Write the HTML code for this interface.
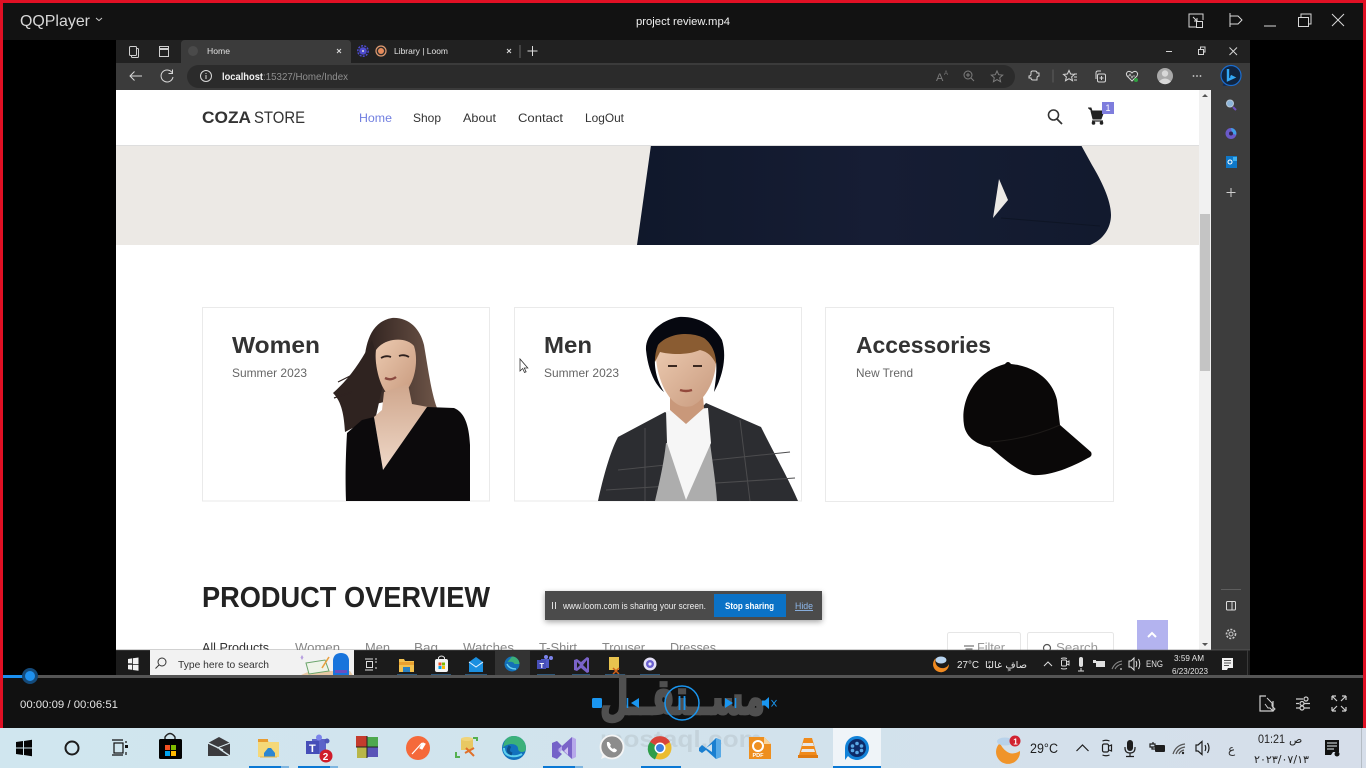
<!DOCTYPE html>
<html lang="en">
<head>
<meta charset="utf-8">
<title>QQPlayer - project review.mp4</title>
<style>
html,body{margin:0;padding:0;width:1366px;height:768px;overflow:hidden;background:#000}
svg{display:block;position:absolute;left:0;top:0;filter:blur(.35px)}
text{font-family:"Liberation Sans","DejaVu Sans",sans-serif}
.ar{font-family:"DejaVu Sans","Liberation Sans",sans-serif}
</style>
</head>
<body>
<svg width="1366" height="768" viewBox="0 0 1366 768" xmlns="http://www.w3.org/2000/svg">
<defs>
<linearGradient id="tb" x1="0" x2="1" y1="0" y2="0"><stop offset="0" stop-color="#d0e6ef"/><stop offset=".6" stop-color="#d2e2ec"/><stop offset="1" stop-color="#d6deea"/></linearGradient>
<linearGradient id="jk" x1="0" x2="1" y1="0" y2="0"><stop offset="0" stop-color="#10182b"/><stop offset=".5" stop-color="#161d34"/><stop offset="1" stop-color="#121a2e"/></linearGradient>
<linearGradient id="skin" x1="0" x2="1" y1="0" y2="1"><stop offset="0" stop-color="#eccab0"/><stop offset="1" stop-color="#c89a7e"/></linearGradient>
<linearGradient id="chest" x1="0" x2="0" y1="0" y2="1"><stop offset="0" stop-color="#cfa68c"/><stop offset="1" stop-color="#efd8c8"/></linearGradient>
<linearGradient id="hairw" x1="0" x2="1" y1="0" y2="0"><stop offset="0" stop-color="#2e211e"/><stop offset="1" stop-color="#6e5548"/></linearGradient>
<filter id="sh" x="-10%" y="-40%" width="120%" height="180%"><feGaussianBlur stdDeviation="3"/></filter>
<clipPath id="page"><rect x="116" y="90" width="1083" height="560"/></clipPath>
</defs>

<!-- outer frame -->
<rect width="1366" height="768" fill="#000"/>
<rect width="1366" height="3" fill="#e01024"/>
<rect y="0" width="3" height="728" fill="#e01024"/>
<rect x="1363" y="0" width="3" height="728" fill="#e01024"/>
<rect x="3" y="3" width="1360" height="37" fill="#121212"/>

<!-- player header -->
<text x="20" y="26" font-size="16" fill="#d8d8d8" textLength="70" lengthAdjust="spacingAndGlyphs">QQPlayer</text>
<path d="M96 18l3 2.6 3-2.6" fill="none" stroke="#ccc" stroke-width="1"/>
<text x="636" y="25" font-size="11" fill="#f0f0f0" textLength="94" lengthAdjust="spacingAndGlyphs">project review.mp4</text>
<g fill="none" stroke="#d8d8d8" stroke-width="1">
<path d="M1196 14h-7v13h7M1196 14h7v6M1193 17l4 4M1197 18v3h-3"/><rect x="1196.500" y="21.500" width="6" height="6"/>
<path d="M1230 13v14M1230 16l8 0 4 4-4 4-8 0" stroke-linejoin="round"/>
<path d="M1264 26h12"/>
<rect x="1298.500" y="17.500" width="10" height="9"/><path d="M1301 17v-3h10v10h-2"/>
<path d="M1332 14l12 12M1344 14l-12 12"/>
</g>

<!-- browser chrome -->
<rect x="116" y="40" width="1134" height="23" fill="#212121"/>
<path d="M181 63v-19q0-4 4-4h162q4 0 4 4v19z" fill="#3b3b3b"/>
<rect x="116" y="63" width="1134" height="27" fill="#3b3b3b"/>
<rect x="187" y="65" width="828" height="23" rx="11.500" fill="#2b2b2b"/>
<g fill="none" stroke="#cfcfcf" stroke-width="1">
<rect x="131.500" y="48.500" width="7" height="9" rx="1"/><rect x="129.500" y="46.500" width="7" height="9" rx="1" fill="#212121"/>
<rect x="159.500" y="46.500" width="9" height="10"/><path d="M159 49h10" stroke-width="2"/>
</g>
<circle cx="193" cy="51" r="5" fill="#4a4a4a"/>
<text x="207" y="54" font-size="8.500" fill="#e2e2e2" textLength="23" lengthAdjust="spacingAndGlyphs">Home</text>
<path d="M337 49l4 4M341 49l-4 4M507 49l4 4M511 49l-4 4" stroke="#dcdcdc" stroke-width="1" fill="none"/>
<circle cx="363" cy="51" r="3.800" fill="#4d4bd0"/><circle cx="363" cy="51" r="5.200" fill="none" stroke="#4d4bd0" stroke-width="1.500" stroke-dasharray="2 1.200"/><circle cx="363" cy="51" r="1" fill="#ddd"/>
<circle cx="381" cy="51" r="5" fill="#2b2b2b" stroke="#e09a70" stroke-width="1.200"/><circle cx="381" cy="51" r="3" fill="#e68a5a"/>
<text x="394" y="54" font-size="8.500" fill="#e2e2e2" textLength="54" lengthAdjust="spacingAndGlyphs">Library | Loom</text>
<path d="M520 45v13" stroke="#666" stroke-width="1"/>
<path d="M532.500 46v10M527.500 51h10" stroke="#ddd" stroke-width="1" fill="none"/>
<g fill="none" stroke="#d4d4d4" stroke-width="1">
<path d="M1166 51.500h6"/>
<rect x="1198.500" y="49.500" width="5" height="5"/><path d="M1200.500 49v-2h4.500v5h-1"/>
<path d="M1229.500 47.500l7.500 7.500M1237 47.500l-7.500 7.500"/>
<path d="M142 76h-12M134.500 71.500l-4.500 4.500 4.500 4.500" stroke="#d8d8d8"/>
<path d="M172 72.500A6 6 0 1 0 173 77M172.500 69.500v4h-4" stroke="#d8d8d8"/>
<circle cx="206" cy="76" r="5.500" stroke="#d8d8d8"/><path d="M206 75v4M206 73v1" stroke="#d8d8d8"/>
</g>
<text x="222" y="80" font-size="10.500" fill="#f2f2f2" font-weight="700" textLength="41" lengthAdjust="spacingAndGlyphs">localhost</text>
<text x="263" y="80" font-size="10.500" fill="#8f8f8f" textLength="85" lengthAdjust="spacingAndGlyphs">:15327/Home/Index</text>
<g fill="none" stroke="#7c7c7c" stroke-width="1">
<text x="936" y="81" font-size="11" fill="#7c7c7c" stroke="none">A</text><text x="944" y="75" font-size="6" fill="#7c7c7c" stroke="none">A</text>
<circle cx="968" cy="75" r="4"/><path d="M971 78l3 3M966 75h4M968 73v4"/>
<path d="M997 71l1.700 3.700 4 .4-3 2.700 .9 3.900-3.600-2.100-3.600 2.100 .9-3.900-3-2.700 4-.4z"/>
</g>
<g fill="none" stroke="#d6d6d6" stroke-width="1">
<path d="M1032 71h3q2 0 2 2h2v3q-2 0-2 2v2h-4q-2 0-2-2h-2v-2q2 0 2-2v-2z"/>
<path d="M1053 69.500v13" stroke="#5c5c5c"/>
<path d="M1069 70.500l1.600 3.500 3.900.4-2.900 2.500.9 3.800-3.500-2-3.500 2 .9-3.800-2.900-2.500 3.900-.4z"/><path d="M1074 74h3M1074 77h3M1074 80h3"/>
<rect x="1097.500" y="74" width="8" height="8" rx="1.500"/><path d="M1096 79v-6q0-2 2-2h3M1101.500 76v4M1099.500 78h4"/>
<path d="M1132 81l-5-5q-1.500-3 1-4.500 2.500-.5 4 1.500 1.500-2 4-1.500 2.500 1.500 1 4.500z"/><path d="M1127 76h2l1-2 2 4 1-2h2" stroke-width=".7"/>
</g>
<circle cx="1136" cy="80" r="2" fill="#30a040"/>
<circle cx="1165" cy="76" r="8" fill="#a9a9a9"/><circle cx="1165" cy="73.500" r="3.200" fill="#d8d8d8"/><path d="M1159 81.500q6-6 12 0a8 8 0 0 1-12 0z" fill="#d8d8d8"/>
<g fill="#d0d0d0"><circle cx="1193.500" cy="76" r=".9"/><circle cx="1197" cy="76" r=".9"/><circle cx="1200.500" cy="76" r=".9"/></g>
<path d="M1224 83l-1.500 2.500q8 1 14-2z" fill="#102a55"/>
<circle cx="1231" cy="75.500" r="10" fill="#10243f" stroke="#1a6dd0" stroke-width="1.200"/>
<path d="M1228 69v11l5.500-2.500-3-1.500" fill="none" stroke="#33a8f5" stroke-width="2.400"/>

<!-- page -->
<g clip-path="url(#page)">
<rect x="116" y="90" width="1083" height="560" fill="#fff"/>
<rect x="116" y="145" width="1083" height="100" fill="#ece9e5"/>
<path d="M651 145L637 245H1090C1103 240 1111 228 1111 215C1111 200 1101 180 1092 165L1081 145Z" fill="url(#jk)"/>
<path d="M999 179L1008 200L993 218Z" fill="#ece9e5"/>
<path d="M1001 218L1100 226" stroke="#0e1525" stroke-width="1" fill="none"/>
<rect x="116" y="145" width="1083" height="1" fill="#dedede"/>

<!-- navbar -->
<text x="202" y="123" font-size="17" font-weight="700" fill="#333" textLength="49" lengthAdjust="spacingAndGlyphs">COZA</text>
<text x="254" y="123" font-size="17" fill="#333" textLength="51" lengthAdjust="spacingAndGlyphs">STORE</text>
<g font-size="12" fill="#333">
<text x="359" y="122" fill="#717fe0" textLength="33" lengthAdjust="spacingAndGlyphs">Home</text>
<text x="413" y="122" textLength="28" lengthAdjust="spacingAndGlyphs">Shop</text>
<text x="463" y="122" textLength="33" lengthAdjust="spacingAndGlyphs">About</text>
<text x="518" y="122" textLength="45" lengthAdjust="spacingAndGlyphs">Contact</text>
<text x="585" y="122" textLength="39" lengthAdjust="spacingAndGlyphs">LogOut</text>
</g>
<circle cx="1053.500" cy="115" r="5" fill="none" stroke="#333" stroke-width="1.600"/><path d="M1057 119l5 5" stroke="#333" stroke-width="1.800"/>
<path d="M1088 108h3l1 3h12l-3 8h-8l-2-8" fill="#222" stroke="#222" stroke-width="1"/><path d="M1092 121h11" stroke="#222" stroke-width="1.200"/>
<circle cx="1093.500" cy="123" r="1.800" fill="#222"/><circle cx="1101.500" cy="123" r="1.800" fill="#222"/>
<rect x="1102" y="102" width="12" height="12" fill="#7e7ddd"/>
<text x="1105.500" y="111" font-size="9" fill="#fff">1</text>

<!-- banners -->
<g fill="#fff" stroke="#eaeaea" stroke-width="1">
<rect x="202.500" y="307.500" width="287" height="193.500"/>
<rect x="514.500" y="307.500" width="287" height="193.500"/>
<rect x="825.500" y="307.500" width="288" height="194"/>
</g>

<!-- woman -->
<g>
<path d="M392 318C408 317 420 328 424 345C428 368 431 392 437 408L420 412L392 400L372 405L364 372C364 350 368 322 392 318Z" fill="url(#hairw)"/>
<path d="M372 340C362 360 350 378 333 393C342 402 344 416 345 432L376 416L384 380Z" fill="#2f2320"/>
<path d="M358 372L338 382M352 392L334 398" stroke="#2f2320" stroke-width="1.200" fill="none"/>
<path d="M376 350C384 338 406 336 414 346C418 358 416 376 409 387C403 395 394 397 388 394C380 388 374 364 376 350Z" fill="url(#skin)"/>
<path d="M384 392L408 384L412 404L428 407L383 470L374 417L382 410Z" fill="url(#chest)"/>
<path d="M381 358q5-3 10-1M399 356q5-2 10 1" stroke="#2e211e" stroke-width="1.800" fill="none"/>
<path d="M385 378q6 3 11-1" stroke="#8a4a40" stroke-width="2.400" fill="none"/>
<path d="M346 501C345 475 346 450 347 433L362 420L374 417L383 470L427 407L454 408C464 412 469 424 470 445L470 501Z" fill="#0c0a0c"/>
</g>

<!-- man -->
<g>
<path d="M598 501C603 478 610 452 618 437L665 412L686 425L706 403L761 427C775 455 790 482 798 501Z" fill="#2c2d31"/>
<path d="M618 470L790 452M606 490L795 478M645 428V501M740 420L750 501" stroke="#4c4c4e" stroke-width="1" fill="none"/>
<path d="M655 501C660 480 664 462 666 443L710 443C713 465 716 485 717 501Z" fill="#adadad"/>
<path d="M666 411L708 408L711 443L686 500L667 443Z" fill="#f6f6f6"/>
<path d="M670 385L670 410L686 424L704 408L702 385Z" fill="#c9987a"/>
<path d="M656 350C660 344 712 344 716 352C718 375 708 398 692 406C680 409 672 402 666 392C660 382 655 365 656 350Z" fill="url(#skin)"/>
<path d="M655 362C650 345 668 332 686 332C704 332 720 345 716 364C712 356 708 352 700 350C686 356 668 354 660 352Z" fill="#8a5c32"/>
<path d="M679 317C697 316 714 325 722 340C727 356 723 376 714 392C717 372 720 350 704 338C690 331 668 333 658 345C652 360 655 378 664 392C655 385 648 370 646 350C645 335 660 320 679 317Z" fill="#060810"/>
<path d="M668 366h9M693 366h9" stroke="#3a2820" stroke-width="2"/>
<path d="M680 390q6 2 12 0" stroke="#93493c" stroke-width="2.400" fill="none"/>
</g>

<!-- cap -->
<path d="M1005 364Q1008 360 1011 364C1032 366 1052 378 1057 400L1060 425L1091 452Q1093 456 1088 458C1070 468 1050 476 1033 475C1018 472 1003 458 990 447C978 445 966 438 964 425C960 400 975 372 1005 364Z" fill="#0a0808"/>
<path d="M990 442C1015 440 1040 434 1060 425" fill="none" stroke="#1d1a18" stroke-width="1"/>

<g fill="#333" font-weight="700" font-size="23">
<text x="232" y="353" textLength="88" lengthAdjust="spacingAndGlyphs">Women</text>
<text x="544" y="353" textLength="48" lengthAdjust="spacingAndGlyphs">Men</text>
<text x="856" y="353" textLength="135" lengthAdjust="spacingAndGlyphs">Accessories</text>
</g>
<g fill="#666" font-size="12">
<text x="232" y="377" textLength="75" lengthAdjust="spacingAndGlyphs">Summer 2023</text>
<text x="544" y="377" textLength="75" lengthAdjust="spacingAndGlyphs">Summer 2023</text>
<text x="856" y="377" textLength="57" lengthAdjust="spacingAndGlyphs">New Trend</text>
</g>
<path d="M520 359v12l2.700-2.500 1.800 4 1.600-.7-1.800-3.800h3.500z" fill="#fff" stroke="#333" stroke-width=".8"/>

<!-- product overview -->
<text x="202" y="607" font-size="29" font-weight="700" fill="#222" textLength="288" lengthAdjust="spacingAndGlyphs">PRODUCT OVERVIEW</text>
<g font-size="12.500" fill="#888">
<text x="202" y="652" fill="#333" textLength="67" lengthAdjust="spacingAndGlyphs">All Products</text>
<text x="295" y="652" textLength="45" lengthAdjust="spacingAndGlyphs">Women</text>
<text x="365" y="652" textLength="25" lengthAdjust="spacingAndGlyphs">Men</text>
<text x="414" y="652" textLength="24" lengthAdjust="spacingAndGlyphs">Bag</text>
<text x="463" y="652" textLength="51" lengthAdjust="spacingAndGlyphs">Watches</text>
<text x="539" y="652" textLength="38" lengthAdjust="spacingAndGlyphs">T-Shirt</text>
<text x="602" y="652" textLength="43" lengthAdjust="spacingAndGlyphs">Trouser</text>
<text x="670" y="652" textLength="46" lengthAdjust="spacingAndGlyphs">Dresses</text>
</g>
<g fill="#fff" stroke="#e6e6e6"><rect x="947.500" y="632.500" width="73" height="30" rx="2"/><rect x="1027.500" y="632.500" width="86" height="30" rx="2"/></g>
<path d="M964 646h10M965.500 649h7M967 652h4" stroke="#555" stroke-width="1"/>
<circle cx="1047" cy="648" r="3.500" fill="none" stroke="#555" stroke-width="1.200"/>
<g font-size="12.500" fill="#999"><text x="977" y="652" textLength="28" lengthAdjust="spacingAndGlyphs">Filter</text><text x="1056" y="652" textLength="42" lengthAdjust="spacingAndGlyphs">Search</text></g>
<rect x="1137" y="620" width="31" height="30" fill="#b3b3ef"/>
<path d="M1148 637l4-4 4 4" fill="none" stroke="#fff" stroke-width="2"/>
</g>

<!-- scrollbar and sidebar -->
<rect x="1199" y="90" width="12" height="560" fill="#f1f1f1"/>
<rect x="1200" y="214" width="10" height="157" fill="#c4c4c4"/>
<path d="M1205 94l-3 3h6zM1205 646l-3-3h6z" fill="#555"/>
<rect x="1211" y="90" width="39" height="560" fill="#3d3d3d"/>
<circle cx="1230" cy="103.500" r="3.500" fill="#8cb4d8" stroke="#b8c8d8"/><path d="M1233 107l3 3" stroke="#7050c0" stroke-width="2"/>
<circle cx="1231" cy="133.500" r="5.500" fill="#6a5ac8"/><path d="M1231 128a5.500 5.500 0 0 1 5 7l-4-2z" fill="#3fa0e8"/><circle cx="1231" cy="133.500" r="2" fill="#30244c"/>
<rect x="1226" y="156" width="11" height="12" fill="#0f78c8"/><rect x="1233" y="157" width="4" height="4" fill="#3fb0f0"/><circle cx="1230" cy="162" r="2" fill="none" stroke="#fff"/>
<path d="M1231 188v9M1226.500 192.500h9" stroke="#cfcfcf" stroke-width="1"/>
<path d="M1221 589.500h20" stroke="#5e5e5e"/>
<rect x="1226.500" y="601.500" width="9" height="8.500" rx="1" fill="none" stroke="#dcdcdc"/><path d="M1232 601.500v8.500" stroke="#dcdcdc" stroke-width="1"/>
<circle cx="1231" cy="634" r="2" fill="none" stroke="#c8c8c8"/><circle cx="1231" cy="634" r="4.500" fill="none" stroke="#c8c8c8" stroke-width="1.600" stroke-dasharray="2 1.400"/>

<!-- loom bar -->
<rect x="545" y="593" width="277" height="29" fill="#000" opacity=".35" filter="url(#sh)"/>
<rect x="545" y="591" width="277" height="29" fill="#4b4b4b"/>
<path d="M552.500 602v7M555.500 602v7" stroke="#ddd" stroke-width="1"/>
<text x="563" y="609" font-size="9" fill="#eee" textLength="143" lengthAdjust="spacingAndGlyphs">www.loom.com is sharing your screen.</text>
<rect x="714" y="594" width="72" height="23" fill="#0b72c6"/>
<text x="725" y="609" font-size="9" fill="#fff" font-weight="700" textLength="49" lengthAdjust="spacingAndGlyphs">Stop sharing</text>
<text x="795" y="609" font-size="9" fill="#8eb8ec" text-decoration="underline" textLength="18" lengthAdjust="spacingAndGlyphs">Hide</text>

<!-- inner windows taskbar -->
<rect x="116" y="650" width="1134" height="26" fill="#1b1b1b"/>
<rect x="116" y="649.500" width="1134" height="1" fill="#666" opacity=".6"/>
<g fill="#f2f2f2"><path d="M128 659l4-.6v5h-4zM132.800 658.300l5.700-.8v6.500h-5.700zM128 664.800h4v5l-4-.6zM132.800 664.800h5.700v6l-5.700-.8z"/></g>
<rect x="150" y="650" width="204" height="27" fill="#f2f2f2"/>
<circle cx="162" cy="662" r="4" fill="none" stroke="#333"/><path d="M159 665l-3.500 3.500" stroke="#333"/>
<text x="178" y="668" font-size="10.500" fill="#333" textLength="91" lengthAdjust="spacingAndGlyphs">Type here to search</text>
<path d="M298 677q10-7 22-6l30 0 4 6z" fill="#e8c8a4"/>
<path d="M306 663l19-3 4 11-20 3z" fill="#eef4e8" stroke="#6aa56a" stroke-width="1"/>
<path d="M322 668l7-11" stroke="#e8a040" stroke-width="1.600"/>
<path d="M333 660q1-7 8-7t8 7v15h-16z" fill="#1874dc"/>
<rect x="335" y="670" width="12" height="3" fill="#6a4fc0"/>
<path d="M302 655l1.500 2.500 -1.500 2.500 -1.500-2.500z" fill="#b8a0e0"/>
<g fill="none" stroke="#ddd" stroke-width="1"><rect x="366.500" y="661.500" width="6" height="6"/><path d="M365 659h8M365 670h8M375 659h2M375 662h2M375 668h2"/></g>
<rect x="495" y="650" width="35" height="26" fill="#333"/>
<!-- inner app icons -->
<path d="M399 659h5l1 2h9v11h-15z" fill="#f2c14e"/><rect x="399" y="662" width="15" height="3" fill="#e8a030"/><rect x="403" y="667" width="7" height="5" fill="#2a80c0"/>
<rect x="435" y="659" width="13" height="13" rx="2" fill="#f4f4f4"/><path d="M438.500 659v-1.500q3-3 6 0v1.500" fill="none" stroke="#ddd"/>
<rect x="438.500" y="662.500" width="3" height="3" fill="#f25022"/><rect x="442" y="662.500" width="3" height="3" fill="#7fba00"/><rect x="438.500" y="666" width="3" height="3" fill="#00a4ef"/><rect x="442" y="666" width="3" height="3" fill="#ffb900"/>
<path d="M469 662l7-5 7 5v10h-14z" fill="#1a8fe0"/><path d="M469 662l7 5 7-5" fill="none" stroke="#e8f4ff"/>
<circle cx="512" cy="664" r="7.500" fill="#1370b8"/><path d="M512 656.500a7.500 7.500 0 0 1 7.500 7.500h-5q-1-3-7-2z" fill="#39b07c"/><path d="M507 664q2 5 9 5" stroke="#68d0f0" fill="none" stroke-width="1.400"/>
<path d="M541 659h8v9h-8z" fill="#5059c9"/><rect x="537" y="660" width="9" height="9" fill="#464eb8"/><text x="539.500" y="668" font-size="7.500" font-weight="700" fill="#fff">T</text><circle cx="551" cy="658" r="2" fill="#7b83eb"/><circle cx="546" cy="657" r="2" fill="#7b83eb"/>
<path d="M574 660l3-1 4 3 6-5 2 1v14l-2 1-6-5-4 3-3-1z" fill="#7a63c8"/><path d="M577 662v6l3-3zM587 660l-4 5 4 4z" fill="#1b1b1b"/>
<rect x="609" y="657" width="10" height="13" fill="#e8c34e"/><path d="M613 668l6 6M619 668l-6 6" stroke="#d0601a" stroke-width="1.500"/>
<circle cx="650" cy="664" r="6.500" fill="#e4e0f6"/><circle cx="650" cy="664" r="4" fill="#6a5fd0"/><circle cx="650" cy="664" r="1.600" fill="#e8e8f8"/>
<g stroke="#3a80b8" stroke-width="2" opacity=".6"><path d="M397 675h20M431 675h20M465 675h22M537 675h18M572 675h18M605 675h20M640 675h20"/></g>
<!-- inner tray -->
<path d="M936 658a8 8 0 1 0 13 6 5 5 0 0 1-13-6z" fill="#f08a20"/><ellipse cx="941" cy="660" rx="5.500" ry="3.500" fill="#b8d4f0"/>
<text x="957" y="668" font-size="10" fill="#e8e8e8" textLength="22" lengthAdjust="spacingAndGlyphs">27°C</text>
<text class="ar" x="985" y="668" font-size="9.500" fill="#e8e8e8" textLength="42" lengthAdjust="spacingAndGlyphs">صافٍ غالبًا</text>
<g fill="none" stroke="#dcdcdc" stroke-width="1">
<path d="M1044 666l4-4 4 4"/>
<rect x="1061.500" y="660" width="5" height="6" rx="1"/><path d="M1067 662l2-1v4l-2-1M1061 658.500q3-1 6 0M1061 668.500q3 1 6 0"/>
<path d="M1081 668v3M1078 671h6"/>
<path d="M1129 661v6h2l3 3v-12l-3 3zM1136 661q1.500 3 0 6M1138.500 659q2.500 5 0 10"/>
<path d="M1112 669q3-7 10-8M1115 669q2-4 7-5" stroke="#8a8a8a"/>
</g>
<rect x="1079" y="657" width="4" height="10" rx="2" fill="#e0e0e0"/>
<rect x="1096" y="661" width="9" height="6" fill="#e0e0e0"/><path d="M1093 660h3v3h-3" fill="#e0e0e0"/>
<circle cx="1121" cy="669" r="1" fill="#aaa"/>
<text x="1146" y="667" font-size="9" fill="#e0e0e0" textLength="17" lengthAdjust="spacingAndGlyphs">ENG</text>
<text x="1174" y="661" font-size="8.500" fill="#e4e4e4" textLength="30" lengthAdjust="spacingAndGlyphs">3:59 AM</text>
<text x="1172" y="674" font-size="8.500" fill="#e4e4e4" textLength="36" lengthAdjust="spacingAndGlyphs">6/23/2023</text>
<path d="M1222 658h11v10h-5l-1 2h-5z" fill="#f0f0f0"/><path d="M1224 660.500h7M1224 663h7M1224 665.500h5" stroke="#222" stroke-width=".8"/>
<path d="M1247.500 650v26" stroke="#3a3a3a"/>

<!-- player controls -->
<rect x="3" y="678" width="1360" height="50" fill="#111"/>
<rect x="3" y="675" width="1360" height="3" fill="#555"/>
<rect x="3" y="675" width="27" height="3" fill="#1b8ff0"/>
<circle cx="30" cy="676" r="8" fill="#144a7a"/>
<circle cx="30" cy="676" r="5" fill="#1e90ee"/>
<text x="20" y="708" font-size="11" fill="#e6e6e6" textLength="98" lengthAdjust="spacingAndGlyphs">00:00:09 / 00:06:51</text>

<!-- watermark -->
<text class="ar" x="600" y="714" font-size="50" font-weight="700" fill="#505050" stroke="#505050" stroke-width="2.500" textLength="165" lengthAdjust="spacingAndGlyphs">مســتقــل</text>

<!-- transport -->
<rect x="592" y="698" width="10" height="10" rx="1.500" fill="#1a96f0"/>
<path d="M627.500 698v10" stroke="#1a96f0" stroke-width="1.500"/><path d="M639 698v10l-8-5z" fill="#1a96f0"/>
<circle cx="682" cy="703" r="17" fill="none" stroke="#1a96f0" stroke-width="1.500"/>
<path d="M679.500 696v14M684.500 696v14" stroke="#1a96f0" stroke-width="1.800"/>
<path d="M725 698v10l8-5z" fill="#1a96f0"/><path d="M735.500 698v10" stroke="#1a96f0" stroke-width="1.500"/>
<path d="M762 700.500h3l4-3.500v12l-4-3.500h-3z" fill="#1a96f0"/>
<path d="M771.500 700l5 6.500M776.500 700l-5 6.500" stroke="#1a96f0" stroke-width="1"/>
<g fill="none" stroke="#cfcfcf" stroke-width="1.200">
<path d="M1266 696h-6v15h13v-10"/><path d="M1267 698l5 5v3l3 3-2 2-3-3h-2l-3-4" stroke-width="1"/>
<path d="M1296 699h7M1296 708h4M1296 703.500h3M1304 703.500h6M1304 708h6"/><circle cx="1306" cy="699" r="2"/><circle cx="1302" cy="703.500" r="2"/><circle cx="1302" cy="708" r="2"/>
<path d="M1332 696h4M1332 696v4M1332 696l5 5M1346 696h-4M1346 696v4M1346 696l-5 5M1332 711h4M1332 711v-4M1332 711l5-5M1346 711h-4M1346 711v-4M1346 711l-5-5"/>
</g>

<!-- bottom taskbar -->
<rect x="0" y="728" width="1366" height="40" fill="url(#tb)"/>
<rect x="833" y="728" width="48" height="40" fill="#eff4f8"/>
<text x="600" y="747" font-size="23" font-weight="700" fill="#777" opacity=".14" textLength="162" lengthAdjust="spacingAndGlyphs">mostaql.com</text>
<g fill="#0a78d4"><rect x="249" y="766" width="32" height="2"/><rect x="298" y="766" width="32" height="2"/><rect x="543" y="766" width="32" height="2"/><rect x="641" y="766" width="40" height="2"/><rect x="833" y="766" width="48" height="2"/></g>
<g fill="#7db5e0"><rect x="281" y="766" width="8" height="2"/><rect x="330" y="766" width="8" height="2"/><rect x="575" y="766" width="8" height="2"/></g>
<!-- start -->
<path d="M16 742l7-1v6.500h-7zM24 741l8-1.200v7.700h-8zM16 748.500h7v6.500l-7-1zM24 748.500h8v7.700l-8-1.200z" fill="#050505"/>
<circle cx="72" cy="748" r="6.500" fill="none" stroke="#1c1c1c" stroke-width="2"/>
<g fill="none" stroke="#111" stroke-width="1.200"><rect x="114" y="743" width="9" height="10"/><path d="M112 740h11M112 755h11"/><path d="M126 741v2M126 752v3" /></g><rect x="125" y="745" width="3" height="3" fill="#111"/>
<!-- store -->
<rect x="159" y="739" width="23" height="20" rx="1.500" fill="#020202"/><path d="M165 739v-2q5-7 10 0v2" fill="none" stroke="#222" stroke-width="1.400"/>
<rect x="165" y="745" width="5" height="5" fill="#f25022"/><rect x="171" y="745" width="5" height="5" fill="#7fba00"/><rect x="165" y="751" width="5" height="5" fill="#00a4ef"/><rect x="171" y="751" width="5" height="5" fill="#ffb900"/>
<!-- mail -->
<path d="M208 743l11-6 11 6v13h-22z" fill="#3b3b3e"/><path d="M208 743l15 7-2 0 9 6" fill="none" stroke="#d8e8ee" stroke-width="1.400"/><path d="M230 743l-13 5" stroke="#d8e8ee" stroke-width="1" fill="none"/>
<!-- explorer -->
<path d="M258 739h9l2 3h10v15h-21z" fill="#f5d878"/><rect x="258" y="739" width="10" height="3" fill="#e89c30"/><path d="M264 757v-4l4-5h3l4 5v4z" fill="#2b86d2"/><path d="M260 757h17" stroke="#f0b840" stroke-width="1"/>
<!-- teams -->
<rect x="312" y="739" width="14" height="15" fill="#5b62c8"/><rect x="306" y="741" width="13" height="13" fill="#464eb8"/><text x="309" y="752" font-size="11" font-weight="700" fill="#fff">T</text><circle cx="319" cy="737.500" r="3" fill="#7b83eb"/><circle cx="327" cy="741" r="2.500" fill="#4d55b8"/>
<circle cx="326" cy="756" r="6.500" fill="#cf1c2a"/><text x="322.700" y="760" font-size="10" font-weight="700" fill="#fff">2</text>
<!-- win-colored -->
<rect x="356" y="736" width="11" height="11" fill="#c43b2d"/><rect x="367" y="737" width="11" height="10" fill="#4ea84e"/><rect x="357" y="747" width="10" height="11" fill="#b8b648"/><rect x="367" y="747" width="11" height="10" fill="#5a54b8"/><path d="M356 747h22M367 736v22" stroke="#222" stroke-width="1"/>
<!-- postman -->
<circle cx="418" cy="748" r="12" fill="#f5693a"/><path d="M412 754l10-11M420 748l3-5 2 1-3 5z" stroke="#fff" stroke-width="1.200" fill="#fff"/>
<!-- tools -->
<path d="M461 739h12v11h-12z" fill="#e8c862"/><ellipse cx="467" cy="739" rx="6" ry="2" fill="#f0d47a"/><path d="M465 753l9-5M466 748l8 8" stroke="#e0702a" stroke-width="2"/><path d="M477 737v4M456 752v5h4" stroke="#55b050" stroke-width="2" fill="none"/><path d="M473 738h4" stroke="#55b050" stroke-width="2"/>
<!-- edge -->
<circle cx="514" cy="748" r="12" fill="#1272bd"/><path d="M514 736a12 12 0 0 1 12 12q0 4-4 4-4 0-4-4-1-4-7-4-7 1-8 4 1-12 11-12z" fill="#3bb17a"/><path d="M504 748q0 7 7 8 6 1 11-2" fill="none" stroke="#5fd0ee" stroke-width="2"/><path d="M510 746q-4 6 2 8" fill="none" stroke="#0d4f8a" stroke-width="3"/>
<!-- vs -->
<path d="M552 743l5-2 5 5 10-9 4 2v18l-4 2-10-9-5 5-5-2z" fill="#b6a8ea"/><path d="M552 743l5-2 5 5-5 4 5 4-5 5-5-2z" fill="#7462c8"/><path d="M562 746l10-9v22l-10-9zM557 748v4l2-2z" fill="#7a64c8"/><path d="M568 747v8l-4-4z" fill="#cfc6f2"/>
<!-- whatsapp -->
<circle cx="612" cy="747" r="11.500" fill="#8c8c8c" stroke="#f5f5f5" stroke-width="1.800"/><path d="M601 759l2-5 3 3z" fill="#f5f5f5"/><path d="M607 742q-1 6 6 10 3 1 4-2l-3-2-1 1q-2-1-3-3l1-1-2-3z" fill="#fff"/>
<!-- chrome -->
<circle cx="660" cy="748" r="11.500" fill="#ebbc2f"/><path d="M660 748L650 742a11.500 11.500 0 0 1 20-0z" fill="#d8443a"/><path d="M660 748L650 742a11.500 11.500 0 0 0 5 17.500z" fill="#2f9e4a"/><circle cx="660" cy="748" r="5.500" fill="#fff"/><circle cx="660" cy="748" r="4" fill="#3b7fe0"/>
<!-- vscode -->
<path d="M699 748l3-3 4 3 10-10 5 2v17l-5 2-10-9-4 3-3-2z" fill="#1a7fd0"/><path d="M716 738l5 2v17l-5 2z" fill="#59aae6"/><path d="M706 748l6-4v8z" fill="#d0e2ee"/>
<!-- G pdf -->
<path d="M749 737h15l7 7v15h-22z" fill="#ee8f1f"/><path d="M764 737v7h7z" fill="#f8d39a"/><circle cx="758" cy="746" r="5" fill="none" stroke="#fff" stroke-width="2"/><text x="752.500" y="757" font-size="5.500" font-weight="700" fill="#fff">PDF</text>
<!-- vlc -->
<path d="M804 738h8l5 17h-18z" fill="#f08a1a"/><path d="M803 743h10l1 3h-12zM802 749h12l1 3h-14z" fill="#e8e8e8"/><path d="M798 755h20v3h-20z" fill="#e07a10"/>
<!-- qq player -->
<path d="M857 736a12 12 0 1 1 -9 20l-3 4v-12a12 12 0 0 1 12-12z" fill="#1282d8"/><circle cx="857" cy="748" r="9" fill="#0d2a68"/>
<g fill="#5aa8e6"><circle cx="857" cy="743.500" r="1.800"/><circle cx="857" cy="752.500" r="1.800"/><circle cx="852.500" cy="746" r="1.800"/><circle cx="861.500" cy="746" r="1.800"/><circle cx="852.500" cy="750.500" r="1.800"/><circle cx="861.500" cy="750.500" r="1.800"/></g>
<!-- tray -->
<path d="M1000 743a12 12 0 1 0 20 8q-8 5-14 0-4-3-6-8z" fill="#f0942a"/><ellipse cx="1005" cy="741.500" rx="8" ry="4" fill="#b8d2ea"/>
<circle cx="1015" cy="741" r="5.500" fill="#d12230"/><text x="1013.300" y="744.500" font-size="8" font-weight="700" fill="#fff">1</text>
<text x="1030" y="753" font-size="13.500" fill="#1e1e1e" textLength="28" lengthAdjust="spacingAndGlyphs">29°C</text>
<g fill="none" stroke="#1e1e1e" stroke-width="1.200">
<path d="M1076.500 751l6-6 6 6"/>
<rect x="1102.500" y="744" width="6" height="8" rx="1.500"/><path d="M1109 746l2.500-1v6l-2.500-1M1102.500 741q3.500-1.500 7 0M1102.500 755q3.500 1.500 7 0"/>
<path d="M1130 753v3M1126 756.500h8M1125 747v1q0 5 5 5t5-5v-1"/>
<path d="M1153 744v-2M1150 744h5v3h-5zM1152 747v2h3"/>
<path d="M1173 754q3-9 12-10M1176 754q2-6 9-7M1179 754q1-3 5-4" stroke="#555"/>
<path d="M1196 745v6h2l4 3.500v-13l-4 3.500zM1205 745q1.500 3 0 6M1207.500 743q3 5 0 10"/>
</g>
<rect x="1127" y="740" width="6" height="11" rx="3" fill="#1e1e1e"/>
<rect x="1155" y="745" width="10" height="7" rx="1" fill="#1e1e1e"/>
<circle cx="1183" cy="753" r="1.200" fill="#222"/>
<text class="ar" x="1228" y="753" font-size="12" fill="#333">ع</text>
<text x="1258" y="743" font-size="11.500" fill="#222" textLength="27" lengthAdjust="spacingAndGlyphs">01:21</text>
<text class="ar" x="1289" y="743" font-size="11" fill="#222">ص</text>
<text class="ar" x="1254" y="763" font-size="10.500" fill="#222" textLength="55" lengthAdjust="spacingAndGlyphs" direction="ltr" unicode-bidi="bidi-override">٢٠٢٣/٠٧/١٣</text>
<path d="M1325 740h14v12h-6l-2 3h-6z" fill="#111"/><path d="M1327 743h10M1327 746h10M1327 749h7" stroke="#e6eef4" stroke-width="1"/>
<circle cx="1337" cy="754" r="2.500" fill="#111"/>
<path d="M1361.500 728v40" stroke="#b4bcc4" stroke-width="1"/>
</svg>
</body>
</html>
